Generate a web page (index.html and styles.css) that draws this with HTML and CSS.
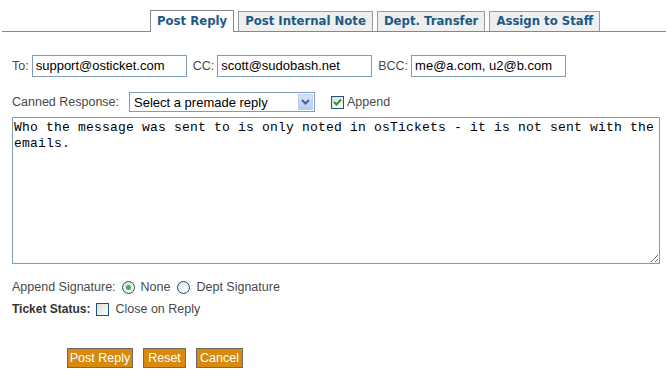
FILE: index.html
```html
<!DOCTYPE html>
<html>
<head>
<meta charset="utf-8">
<link rel="stylesheet" href="styles.css">
</head>
<body>
<div class="tabs">
  <span class="tab active">Post Reply</span>
  <span class="tab">Post Internal Note</span>
  <span class="tab">Dept. Transfer</span>
  <span class="tab">Assign to Staff</span>
</div>
<div class="form">
  <div class="row addr">
    <span class="lbl">To:</span><span class="field">support@osticket.com</span>
    <span class="lbl">CC:</span><span class="field">scott@sudobash.net</span>
    <span class="lbl">BCC:</span><span class="field">me@a.com, u2@b.com</span>
  </div>
  <div class="row canned">
    <span class="lbl wide">Canned Response:</span>
    <span class="select"><span class="sel-text">Select a premade reply</span><span class="sel-btn"><svg width="9" height="6" viewBox="0 0 9 6"><path d="M1 1 L4.5 4.5 L8 1" fill="none" stroke="#4d6185" stroke-width="2"/></svg></span></span>
    <span class="check checked"><svg width="11" height="11" viewBox="0 0 11 11"><path d="M2 5 L4.5 7.5 L9 2.5" fill="none" stroke="#21a121" stroke-width="2"/></svg></span>
    <span class="lbl">Append</span>
  </div>
  <textarea class="msg">Who the message was sent to is only noted in osTickets - it is not sent with the emails.</textarea>
  <div class="row sig">
    <span class="lbl">Append Signature:</span>
    <span class="radio on"><span class="dot"></span></span><span class="lbl opt">None</span>
    <span class="radio"></span><span class="lbl opt">Dept Signature</span>
  </div>
  <div class="row status">
    <span class="lbl bold">Ticket Status:</span>
    <span class="check"></span><span class="lbl opt">Close on Reply</span>
  </div>
  <div class="buttons">
    <span class="btn w1">Post Reply</span>
    <span class="btn w2">Reset</span>
    <span class="btn w3">Cancel</span>
  </div>
</div>
</body>
</html>
```

FILE: styles.css
```css
html, body {
  margin: 0;
  padding: 0;
  background: #fff;
}
body {
  font-family: "Liberation Sans", Arial, sans-serif;
  font-size: 12.5px;
  color: #4a4a4a;
}
.tabs {
  display: flex;
  align-items: flex-end;
  gap: 4px;
  margin: 10px 2px 0 2px;
  padding-left: 148px;
  border-bottom: 1px solid #858596;
  height: 21px;
}
.tab {
  box-sizing: border-box;
  height: 20px;
  padding: 0 6px;
  font-family: "DejaVu Sans", Verdana, sans-serif;
  font-weight: bold;
  font-size: 11.7px;
  line-height: 19px;
  color: #1d5a86;
  background: #efefef;
  border: 1px solid #9a9aa4;
  border-bottom: none;
}
.tab.active {
  height: 22px;
  margin-bottom: -1px;
  background: #fff;
  border-color: #888894;
  padding: 0 6px;
  line-height: 21px;
}
.form {
  padding: 0 0 0 12px;
}
.row {
  display: flex;
  align-items: center;
}
.addr {
  margin-top: 23px;
  height: 22px;
}
.lbl {
  white-space: nowrap;
}
.addr .lbl {
  margin-right: 3px;
}
.field {
  box-sizing: border-box;
  width: 155px;
  height: 22px;
  border: 1px solid #7f9db9;
  padding: 0 3px;
  font-size: 13px;
  line-height: 20px;
  color: #000;
  margin-right: 6px;
}
.canned {
  margin-top: 15px;
  height: 20px;
}
.lbl.wide {
  margin-right: 10px;
}
.select {
  box-sizing: border-box;
  width: 186px;
  height: 20px;
  border: 1px solid #7f9db9;
  display: flex;
  align-items: center;
  justify-content: space-between;
  padding: 1px;
}
.sel-text {
  font-size: 13px;
  color: #000;
  padding-left: 3px;
}
.sel-btn {
  width: 15px;
  height: 16px;
  background: linear-gradient(#d6e3fd, #b6ccf6);
  border: 1px solid #b9cdf5;
  box-sizing: border-box;
  display: flex;
  align-items: center;
  justify-content: center;
}
.check {
  box-sizing: border-box;
  width: 13px;
  height: 13px;
  border: 1px solid #1c5180;
  background: linear-gradient(135deg, #dcdcd6, #fff);
  display: inline-flex;
  align-items: center;
  justify-content: center;
}
.canned .check {
  margin-left: 16px;
  margin-right: 3px;
}
.check svg {
  display: block;
}
.msg {
  display: block;
  box-sizing: border-box;
  margin: 5px 0 0 0;
  width: 648px;
  height: 147px;
  border: 1px solid #7f9db9;
  padding: 2px 1px;
  font-family: "Liberation Mono", "Courier New", monospace;
  font-size: 13px;
  letter-spacing: 0.2px;
  line-height: 16px;
  color: #000;
  resize: both;
  outline: none;
}
.sig {
  margin-top: 15px;
  height: 16px;
}
.sig .lbl:first-child {
  margin-right: 6px;
}
.radio {
  box-sizing: border-box;
  width: 13px;
  height: 13px;
  border-radius: 50%;
  border: 1px solid #1c5180;
  background: radial-gradient(circle at 70% 70%, #fff, #dcdcd6);
  display: inline-flex;
  align-items: center;
  justify-content: center;
  margin-right: 6px;
}
.dot {
  width: 5px;
  height: 5px;
  border-radius: 50%;
  background: #3fb03f;
}
.opt {
  margin-right: 7px;
}
.status {
  margin-top: 6px;
  height: 16px;
}
.bold {
  font-weight: bold;
  font-size: 12px;
  color: #333;
  margin-right: 6px;
}
.status .check {
  margin-right: 6px;
}
.buttons {
  display: flex;
  gap: 10px;
  margin-top: 31px;
  padding-left: 55px;
}
.btn {
  box-sizing: border-box;
  height: 20px;
  border: 1px solid #6b6b6b;
  background: #d98a0c;
  color: #fff;
  font-size: 12.5px;
  line-height: 18px;
  text-align: center;
}
.w1 { width: 66px; }
.w2 { width: 43px; }
.w3 { width: 47px; }
```
